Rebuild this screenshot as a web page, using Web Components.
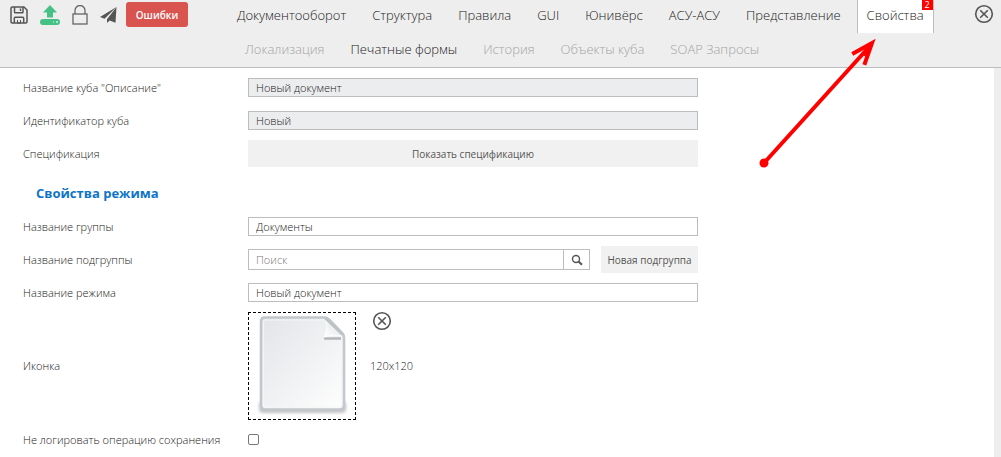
<!DOCTYPE html>
<html lang="ru">
<head>
<meta charset="utf-8">
<title>Свойства</title>
<style>
  html, body { margin: 0; min-height: 100%; }
  html { height: 100%; }
  body {
    height: 100%;
    font-family: "Open Sans", "Noto Sans", sans-serif;
    font-size: 11px;
    font-weight: 300;
    color: #222;
    background: #fff;
    --line: #bdbdbd;
    --bar: #eee;
    --soft: #f1f1f1;
    --text: #222;
  }
</style>
</head>
<body>
<cube-page>
  <page-header slot="header">
    <icon-button slot="tools" icon="save" label="Сохранить"></icon-button>
    <icon-button slot="tools" icon="upload" label="Загрузить"></icon-button>
    <icon-button slot="tools" icon="lock" label="Заблокировать"></icon-button>
    <icon-button slot="tools" icon="plane" label="Отправить"></icon-button>
    <error-button slot="tools">Ошибки</error-button>

    <nav-tab slot="tabs">Документооборот</nav-tab>
    <nav-tab slot="tabs">Структура</nav-tab>
    <nav-tab slot="tabs">Правила</nav-tab>
    <nav-tab slot="tabs">GUI</nav-tab>
    <nav-tab slot="tabs">Юнивёрс</nav-tab>
    <nav-tab slot="tabs">АСУ-АСУ</nav-tab>
    <nav-tab slot="tabs">Представление</nav-tab>
    <nav-tab slot="tabs" active badge="2">Свойства</nav-tab>

    <icon-button slot="close" icon="close" label="Закрыть"></icon-button>

    <nav-tab slot="subtabs" muted>Локализация</nav-tab>
    <nav-tab slot="subtabs">Печатные формы</nav-tab>
    <nav-tab slot="subtabs" muted>История</nav-tab>
    <nav-tab slot="subtabs" muted>Объекты куба</nav-tab>
    <nav-tab slot="subtabs" muted>SOAP Запросы</nav-tab>
  </page-header>

  <text-row label='Название куба "Описание"' value="Новый документ" readonly></text-row>
  <text-row label="Идентификатор куба" value="Новый" readonly></text-row>
  <action-row label="Спецификация" action="Показать спецификацию"></action-row>
  <section-title>Свойства режима</section-title>
  <text-row label="Название группы" value="Документы"></text-row>
  <search-row label="Название подгруппы" placeholder="Поиск" action="Новая подгруппа"></search-row>
  <text-row label="Название режима" value="Новый документ"></text-row>
  <picture-row label="Иконка" size="120x120"></picture-row>
  <check-row label="Не логировать операцию сохранения"></check-row>

  <arrow-mark slot="overlay"></arrow-mark>
</cube-page>

<script>
const ICONS = {
  save: `<svg width="18" height="18" viewBox="0 0 18 18" fill="none" stroke="#555" stroke-width="1.500" stroke-linejoin="round">
    <path d="M1 2.2Q1 1 2.2 1H14l3 3v11.8q0 1.2-1.2 1.2H2.200Q1 17 1 15.800Z"/>
    <path d="M4.500 1v5q0 .8.8.8h6.900q.8 0 .8-.8V1"/><path d="M10.500 2.500v2.500"/>
    <path d="M4.300 17v-4.700q0-1 1-1h7.400q1 0 1 1V17"/><path d="M7.500 14v3h3v-3" stroke-width="1"/></svg>`,
  upload: `<svg width="20" height="20" viewBox="0 0 20 20"><path fill="#45c184" d="M10 0 17 7.500H13V12.500H7V7.500H3Z"/>
    <rect y="14" width="20" height="6" rx="3" fill="#45c184"/><circle cx="13.500" cy="17" r=".7" fill="#bfe6d2"/><circle cx="17" cy="17" r="1" fill="#d5efe2"/></svg>`,
  lock: `<svg width="16" height="20" viewBox="0 0 16 20" fill="none" stroke="#666" stroke-width="1.300">
    <rect x="1" y="9" width="14" height="10"/><path d="M3 9V5.500a5 5 0 0 1 10 0V9"/></svg>`,
  plane: `<svg width="17" height="18" viewBox="0 0 17 18"><path fill="#555" d="M16.500 1 0 11l4.500 1.700Z"/>
    <path fill="#555" d="M16.500 1 7 13.200V17l2.600-2.500 5.900 2.300Z"/></svg>`,
  close: `<svg width="20" height="20" viewBox="0 0 20 20" fill="none" stroke="#555" stroke-width="1.600">
    <circle cx="10" cy="10" r="8.300"/><path d="M6.200 6.200l7.600 7.600M13.800 6.200l-7.600 7.600"/></svg>`,
  search: `<svg width="12" height="12" viewBox="0 0 12 12" fill="none" stroke="#555">
    <circle cx="5" cy="5" r="3.500" stroke-width="1.400"/><path d="M7.500 7.500 11 10.800" stroke-width="2"/></svg>`
};

const esc = s => (s || '').replace(/&/g, '&amp;').replace(/"/g, '&quot;').replace(/</g, '&lt;');

class Base extends HTMLElement {
  connectedCallback() {
    if (this.shadowRoot) return;
    this.attachShadow({ mode: 'open' }).innerHTML =
      `<style>*{box-sizing:border-box}button,input{font:inherit;color:inherit;margin:0}:host{display:block;box-sizing:border-box}${this.css()}</style>${this.html()}`;
  }
  css() { return ''; }
  html() { return '<slot></slot>'; }
  a(n) { return esc(this.getAttribute(n)); }
}

customElements.define('cube-page', class extends Base {
  css() { return `
    :host { position: relative; display: flex; flex-direction: column; min-height: 100%; }
    main { flex: 1; display: flex; flex-direction: column; gap: 6px; padding: 6px 16px 4px 23px; border-right: 7px solid var(--bar); }`; }
  html() { return `<slot name="header"></slot><main><slot></slot></main><slot name="overlay"></slot>`; }
});

customElements.define('page-header', class extends Base {
  css() { return `
    :host { background: var(--bar); border-bottom: 1px solid var(--line); }
    .top { display: grid; grid-template-columns: 227px 1fr auto; height: 33px; }
    .tools { display: flex; align-items: center; gap: 12px; padding: 0 0 4px 10px; }
    nav { display: flex; gap: 6px; }
    .close { display: flex; align-items: center; padding: 0 7px 5px 0; }
    .sub { height: 34px; padding: 1px 0 0 235px; }`; }
  html() { return `
    <div class="top">
      <div class="tools"><slot name="tools"></slot></div>
      <nav><slot name="tabs"></slot></nav>
      <div class="close"><slot name="close"></slot></div>
    </div>
    <nav class="sub"><slot name="subtabs"></slot></nav>`; }
});

customElements.define('icon-button', class extends Base {
  css() { return `button { display: flex; padding: 0; border: 0; background: none; } svg { display: block; }`; }
  html() { return `<button type="button" aria-label="${this.a('label')}">${ICONS[this.getAttribute('icon')]}</button>`; }
});

customElements.define('error-button', class extends Base {
  css() { return `
    :host { margin-left: -3px; }
    button { width: 62px; height: 25px; padding: 0; border: 0; border-radius: 3px; background: #d9534f; color: #fff; font-size: 10px; font-weight: 600; }`; }
  html() { return `<button type="button"><slot></slot></button>`; }
});

customElements.define('nav-tab', class extends Base {
  css() { return `
    :host { position: relative; }
    a { display: block; height: 33px; line-height: 31px; padding: 0 9px; border: solid transparent; border-width: 0 1px; font-size: 13px; color: var(--text); text-decoration: none; white-space: nowrap; }
    :host([muted]) a { color: #a4a4a4; }
    :host([active]) a { background: #fff; border-color: var(--line); }
    .badge { position: absolute; top: 0; right: 1px; width: 11px; height: 10px; background: #f00; color: #fff; font-size: 9px; font-weight: 400; line-height: 10px; text-align: center; }`; }
  html() {
    const b = this.a('badge');
    return `<a href="#"><slot></slot></a>${b ? `<span class="badge">${b}</span>` : ''}`;
  }
});

customElements.define('section-title', class extends Base {
  css() { return `
    :host { padding: 7px 13px 0; }
    h2 { margin: 0; font-size: 13px; line-height: 27px; font-weight: 700; color: #0d74c8; }`; }
  html() { return `<h2><slot></slot></h2>`; }
});

/* Label on the left, control column on the right. */
class Row extends Base {
  css() { return `
    :host { display: grid; grid-template-columns: 225px minmax(0, 450px); align-items: center; min-height: 27px; }
    label, .label { white-space: nowrap; line-height: 16px; }
    .control { display: flex; align-items: center; }
    input[type=text], input[type=search] { appearance: none; display: block; width: 100%; height: 19px; padding: 0 7px; border: 1px solid var(--line); border-radius: 0; background: #fff; outline: 0; }
    input[readonly] { background: #ebedef; }
    input::placeholder { color: #777; opacity: 1; }
    .action { height: 27px; padding: 0; border: 0; background: var(--soft); font-size: 10px; font-weight: 400; color: #555; white-space: nowrap; }
    ${this.more()}`; }
  more() { return ''; }
  html() { return `<label for="c">${this.a('label')}</label><div class="control">${this.control()}</div>`; }
}

customElements.define('text-row', class extends Row {
  control() { return `<input id="c" type="text" value="${this.a('value')}" ${this.hasAttribute('readonly') ? 'readonly' : ''}>`; }
});

customElements.define('action-row', class extends Row {
  more() { return `.action { width: 100%; }`; }
  control() { return `<button id="c" class="action" type="button">${this.a('action')}</button>`; }
});

customElements.define('search-row', class extends Row {
  more() { return `
    .control { gap: 11px; }
    .search { flex: 1; display: flex; }
    .search input { height: 21px; flex: 1; min-width: 0; }
    .find { display: flex; align-items: center; justify-content: center; width: 26px; height: 21px; padding: 0; border: 1px solid var(--line); border-left: 0; background: #fff; }
    .action { width: 97px; }`; }
  control() { return `
    <div class="search"><input id="c" type="search" placeholder="${this.a('placeholder')}"><button class="find" type="button" aria-label="Найти">${ICONS.search}</button></div>
    <button class="action" type="button">${this.a('action')}</button>`; }
});

customElements.define('picture-row', class extends Row {
  more() { return `
    .control { align-items: stretch; gap: 14px; }
    .frame { width: 108px; height: 108px; border: 1px dashed #000; }
    .frame svg { display: block; }
    .info { display: grid; grid-template-rows: 1fr auto 1fr; }
    .info icon-button { margin-left: 2px; margin-top: -1px; }
    .size { line-height: 16px; }`; }
  html() { return `<span class="label">${this.a('label')}</span><div class="control">${this.control()}</div>`; }
  control() { return `
    <div class="frame"><svg width="106" height="106" viewBox="0 0 106 106">
      <defs>
        <linearGradient id="p" x1="0" y1="0" x2="1" y2="1"><stop offset="0" stop-color="#e2e4e8"/><stop offset="1" stop-color="#fefefe"/></linearGradient>
        <linearGradient id="f" x1="0" y1="1" x2="1" y2="0"><stop offset="0" stop-color="#fff"/><stop offset="1" stop-color="#dcdee0"/></linearGradient>
        <filter id="b" x="-20%" y="-60%" width="140%" height="220%"><feGaussianBlur stdDeviation="1.800"/></filter>
        <filter id="s" filterUnits="userSpaceOnUse" x="0" y="0" width="106" height="106"><feGaussianBlur stdDeviation=".7"/></filter>
      </defs>
      <rect x="10" y="88" width="87" height="12" rx="4" fill="#888" opacity=".5" filter="url(#b)"/>
      <g filter="url(#s)">
        <path d="M16 4.500H75Q78 4.500 80 6.500L93 20Q95 22 95 25V92Q95 96.500 90.500 96.500H16.500Q12 96.500 12 92V8.500Q12 4.500 16 4.500Z" fill="url(#p)" stroke="#c2c7cb" stroke-width="2.600"/>
        <path d="M16 7H75L92.500 24V92Q92.500 94 90.500 94H16.500Q14.500 94 14.500 92V8.500Q14.500 7 16 7Z" fill="none" stroke="#f4f5f6" stroke-width="1.200"/>
      </g>
      <g filter="url(#s)">
        <path d="M75 25.500H92" fill="none" stroke="#b4b6b8" stroke-width="2.500"/>
        <path d="M77 6.500Q79 14 75.500 24Q85 21 93.500 22.500Z" fill="url(#f)" stroke="#fff" stroke-width=".8"/>
        <path d="M76 4.800 94 22" fill="none" stroke="#bcc1c4" stroke-width="2.600"/>
      </g>
    </svg></div>
    <div class="info"><icon-button icon="close" label="Удалить"></icon-button><span class="size">${this.a('size')}</span></div>`; }
});

customElements.define('check-row', class extends Row {
  more() { return `input { appearance: none; width: 11px; height: 11px; border: 1px solid #767676; border-radius: 2px; background: #fff; }`; }
  control() { return `<input id="c" type="checkbox">`; }
});

customElements.define('arrow-mark', class extends Base {
  css() { return `:host { position: absolute; left: 758px; top: 38px; pointer-events: none; } svg { display: block; }`; }
  html() { return `<svg width="120" height="132" viewBox="0 0 120 132" fill="none" stroke="#f00" stroke-width="4" stroke-linecap="square">
    <circle cx="6" cy="125" r="4.500" fill="#f00" stroke="none"/>
    <path d="M6 125 112 8"/><path d="M96 15 114 5 107 25"/><path d="M104 15 114 5 108 18Z" fill="#f00" stroke-width="1"/></svg>`; }
});
</script>
</body>
</html>
